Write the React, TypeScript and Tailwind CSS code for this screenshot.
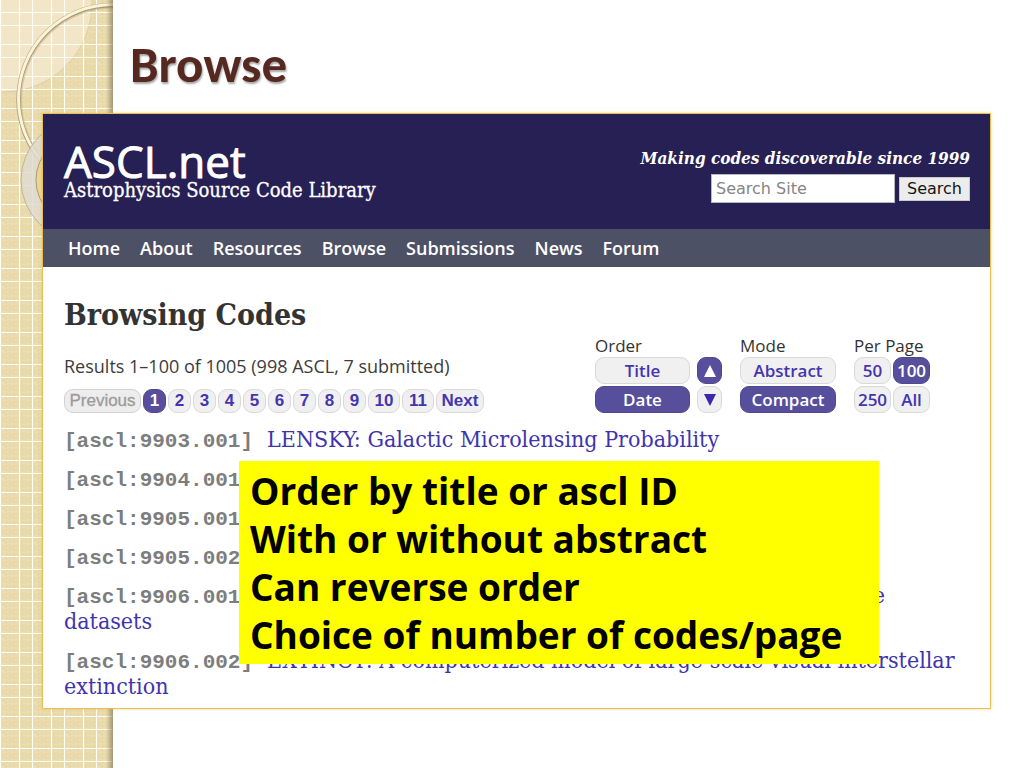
import React from "react";

const SANS = "font-['Open_Sans',sans-serif]";
const SERIF = "font-['DejaVu_Serif_Condensed','DejaVu_Serif',serif]";

const navItems = ["Home", "About", "Resources", "Browse", "Submissions", "News", "Forum"];
const pages = ["1", "2", "3", "4", "5", "6", "7", "8", "9", "10", "11"];

const entries = [
  { id: "9903.001", title: "LENSKY: Galactic Microlensing Probability" },
  { id: "9904.001", title: "" },
  { id: "9905.001", title: "" },
  { id: "9905.002", title: "" },
  { id: "9906.001", title: "" },
  { id: "9906.002", title: "EXTINCT: A computerized model of large-scale visual interstellar extinction" },
];

const notes = [
  "Order by title or ascl ID",
  "With or without abstract",
  "Can reverse order",
  "Choice of number of codes/page",
];

function Backdrop() {
  return (
    <svg className="absolute left-0 top-0 h-full w-[124px]" aria-hidden="true">
      <defs>
        <pattern id="weave" width="8" height="8" patternUnits="userSpaceOnUse">
          <rect width="8" height="8" fill="#eadcae" />
          <path d="M1 2h2M5 6h2M2 5l2-1M6 1l1 2" stroke="#e3d09a" strokeWidth="1" />
        </pattern>
        <pattern id="grid" width="32" height="32" patternUnits="userSpaceOnUse">
          <path d="M0.5 0V32M19.5 0V32M0 12.5H32M0 25.5H32" stroke="#fffdf4" strokeWidth="1.2" />
        </pattern>
        <linearGradient id="edge">
          <stop offset="0" stopColor="#6b6040" stopOpacity="0" />
          <stop offset="1" stopColor="#6b6040" stopOpacity="0.55" />
        </linearGradient>
        <clipPath id="strip">
          <rect width="113" height="100%" />
        </clipPath>
      </defs>
      <g clipPath="url(#strip)">
        <rect width="113" height="100%" fill="url(#weave)" />
        <circle cx="3" cy="3" r="89" fill="#f5ead0" fillOpacity="0.75" stroke="#ddcfa6" />
        <rect width="113" height="100%" fill="url(#grid)" />
        <circle cx="113.5" cy="100" r="94" fill="none" stroke="#85784d" strokeOpacity="0.25" strokeWidth="5" />
        <circle cx="113" cy="99.5" r="94.5" fill="none" stroke="#9a8d63" strokeOpacity="0.8" strokeWidth="4.4" />
        <circle cx="113" cy="99" r="94.5" fill="none" stroke="#fcf3d8" strokeWidth="3" />
        <circle cx="82" cy="180" r="46" fill="#ecd694" />
        <circle cx="82" cy="180" r="53" fill="none" stroke="#dedad0" strokeOpacity="0.85" strokeWidth="15" />
        <circle cx="82" cy="180" r="61" fill="none" stroke="#bdb699" />
        <circle cx="82" cy="180" r="46" fill="none" stroke="#a89c70" />
        <rect x="106" width="7" height="100%" fill="url(#edge)" />
      </g>
    </svg>
  );
}

function Choice({ label, active }: { label: string; active?: boolean }) {
  return (
    <button
      type="button"
      className={`flex h-[27px] w-full items-center justify-center rounded-[9px] border text-[17px] leading-6 font-semibold ${SANS} ${
        active ? "border-[#51498f] bg-[#574f9b] text-white" : "border-[#d9d9dc] bg-[#f0f0f1] text-[#4436ae]"
      }`}
    >
      {label}
    </button>
  );
}

function Arrow({ down, active }: { down?: boolean; active?: boolean }) {
  return (
    <button
      type="button"
      aria-label={down ? "Descending" : "Ascending"}
      className={`flex h-[27px] w-[25px] items-center justify-center rounded-[9px] border ${
        active ? "border-[#51498f] bg-[#574f9b] text-white" : "border-[#d9d9dc] bg-[#f0f0f1] text-[#3a28b0]"
      }`}
    >
      <svg width="14" height="14" viewBox="0 0 14 14" fill="currentColor">
        <path d={down ? "M1 1h12L7 13z" : "M1 13h12L7 1z"} />
      </svg>
    </button>
  );
}

function Pager() {
  const base = "flex h-6 items-center justify-center rounded-[9px] border text-[17px] leading-5 font-['Liberation_Sans',Arial,sans-serif]";
  const idle = "border-[#d9d9dc] bg-[#f0f0f1] font-bold text-[#4436ae]";
  return (
    <div className="flex gap-[2px]">
      <button type="button" disabled className={`${base} w-[77px] border-[#d2d2d4] bg-[#ededee] text-[#9b9b9b] [-webkit-text-stroke:0.3px]`}>
        Previous
      </button>
      {pages.map((p) => (
        <button
          type="button"
          key={p}
          className={`${base} ${p.length > 1 ? "w-8" : "w-[23px]"} ${
            p === "1" ? "border-[#51498f] bg-[#574f9b] font-bold text-white" : idle
          }`}
        >
          {p}
        </button>
      ))}
      <button type="button" className={`${base} w-12 ${idle}`}>
        Next
      </button>
    </div>
  );
}

export default function App() {
  return (
    <div className="relative min-h-screen bg-white">
      <Backdrop />
      <div className="relative pr-[33px] pb-[59px] pl-[42px]">
        <h1 className="pt-[35px] pb-[18px] pl-[88px] text-[51px] leading-[60px] font-bold text-[#55291f] [text-shadow:1px_2px_2px_rgba(0,0,0,0.35)] font-['Carlito','Lato',sans-serif]">
          Browse
        </h1>

        <div className="relative border border-[#e8bf55] bg-white shadow-[0_0_3px_rgba(232,176,60,0.5)]">
          <header className="flex h-[115px] items-start justify-between bg-[#262054] pr-5 pl-[21px] text-white">
            <div className="pt-[27px]">
              <p className={`text-[44px] leading-10 [-webkit-text-stroke:1px] ${SANS}`}>ASCL.net</p>
              <p className={`text-[20px] leading-[18px] [-webkit-text-stroke:0.3px] ${SERIF}`}>Astrophysics Source Code Library</p>
            </div>
            <div className="flex flex-col items-end pt-8">
              <p className={`text-[17px] leading-6 font-bold italic ${SERIF}`}>Making codes discoverable since 1999</p>
              <form className="mt-1 flex items-center gap-1 text-[16px] font-['DejaVu_Sans',sans-serif]" onSubmit={(e) => e.preventDefault()}>
                <input
                  aria-label="Search Site"
                  placeholder="Search Site"
                  className="h-[29px] w-[184px] border border-[#b8b8c4] bg-white px-1 text-black placeholder:text-[#858585]"
                />
                <button type="submit" className="h-6 w-[71px] border border-[#c9c9cc] bg-[#ececec] leading-5 text-[#161616]">
                  Search
                </button>
              </form>
            </div>
          </header>

          <nav className={`flex h-[38px] items-center gap-5 bg-[#4d5166] pl-[25px] text-[18px] leading-6 font-semibold text-white ${SANS}`}>
            {navItems.map((n) => (
              <a key={n} href="#">
                {n}
              </a>
            ))}
          </nav>

          <main className="px-[21px] pt-[30px] pb-[9px]">
            <div className="flex items-end justify-between pr-[39px]">
              <div>
                <h2 className={`text-[30px] leading-9 font-bold text-[#333] ${SERIF}`}>Browsing Codes</h2>
                <p className={`mt-[21px] mb-[11px] text-[18px] leading-6 font-medium text-[#3c3c3c] ${SANS}`}>
                  Results 1–100 of 1005 (998 ASCL, 7 submitted)
                </p>
                <Pager />
              </div>
              <div className={`flex gap-[18px] text-[17px] leading-[22px] font-medium text-[#333] ${SANS}`}>
                <div>
                  <p>Order</p>
                  <div className="grid grid-cols-[95px_25px] gap-x-[7px] gap-y-[2px]">
                    <Choice label="Title" />
                    <Arrow active />
                    <Choice label="Date" active />
                    <Arrow down />
                  </div>
                </div>
                <div>
                  <p>Mode</p>
                  <div className="grid w-24 gap-[2px]">
                    <Choice label="Abstract" />
                    <Choice label="Compact" active />
                  </div>
                </div>
                <div>
                  <p>Per Page</p>
                  <div className="grid grid-cols-[37px_37px] gap-[2px]">
                    <Choice label="50" />
                    <Choice label="100" active />
                    <Choice label="250" />
                    <Choice label="All" />
                  </div>
                </div>
              </div>
            </div>

            <ul className={`mt-[13px] space-y-[13px] text-[23px] leading-[26px] text-[#4034ad] ${SERIF}`}>
              {entries.map((e) => (
                <li key={e.id}>
                  <span className="mr-[14px] text-[21px] leading-none font-bold text-[#7d7d7d] font-['Liberation_Mono','Courier_New',monospace]">
                    [ascl:{e.id}]
                  </span>
                  {e.id === "9906.001" ? (
                    <>
                      <span className="inline-block w-[618px] max-w-[75%] text-right">e</span>
                      <a href="#" className="block">datasets</a>
                    </>
                  ) : (
                    <a href="#">{e.title}</a>
                  )}
                </li>
              ))}
            </ul>
          </main>

          <aside className={`absolute top-[347px] left-[196px] w-[640px] bg-[#ffff00] px-[11px] pt-[6px] pb-[5px] text-[37px] leading-[48px] font-bold text-black ${SANS}`}>
            {notes.map((n) => (
              <p key={n}>{n}</p>
            ))}
          </aside>
        </div>
      </div>
    </div>
  );
}
